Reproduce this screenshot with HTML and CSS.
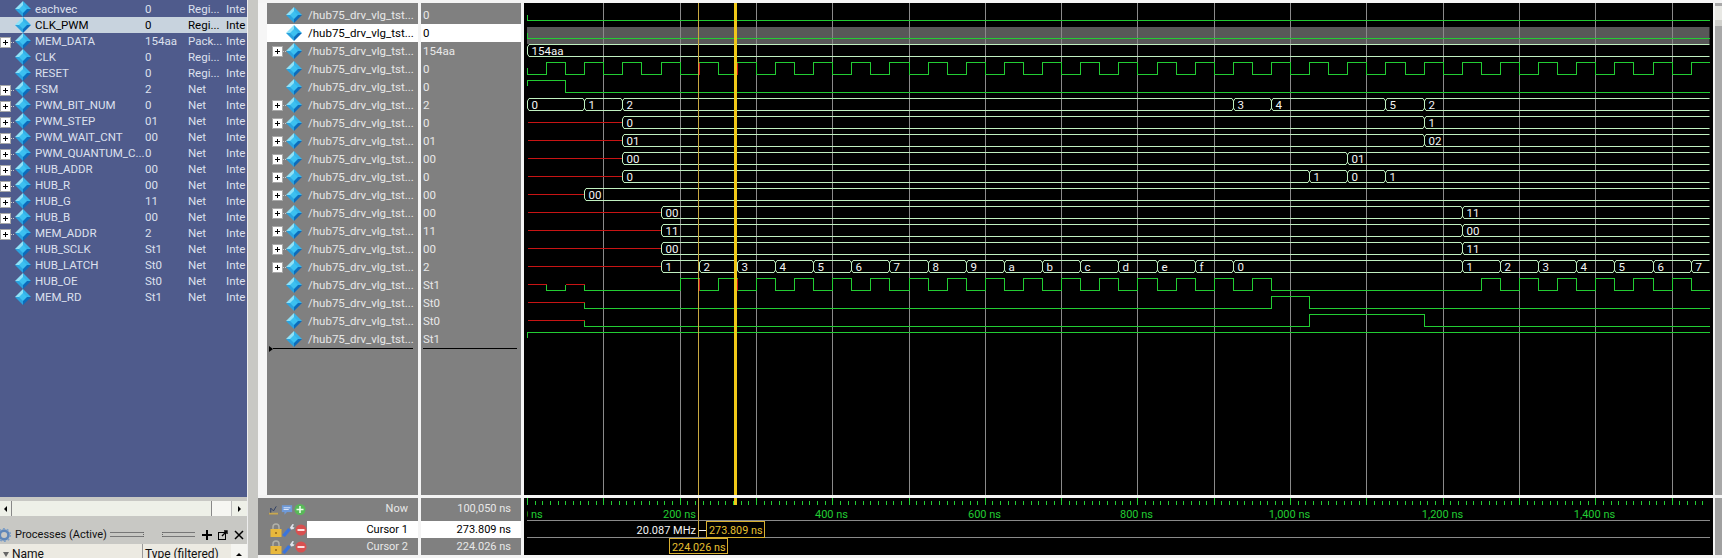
FILE: index.html
```html
<!DOCTYPE html>
<html lang="en">
<head>
<meta charset="utf-8">
<title>Wave</title>
<link rel="stylesheet" href="styles.css">
</head>
<body>
<svg class="defs" width="0" height="0" aria-hidden="true">
  <symbol id="dia" viewBox="0 0 16 16">
    <polygon points="8,0 0,8 8,8" fill="#8fe2f8"/>
    <polygon points="8,0 16,8 8,8" fill="#35b4ea"/>
    <polygon points="0,8 8,16 8,8" fill="#2aa2de"/>
    <polygon points="16,8 8,16 8,8" fill="#0b6cbc"/>
    <polygon points="8,4 12,8 8,12 4,8" fill="#3cc0f0"/>
  </symbol>
  <symbol id="plus" viewBox="0 0 15 12">
    <rect x="0.5" y="1.5" width="10" height="10" fill="#fff" stroke="#a8a8a8"/>
    <path d="M3 6.5h5M5.5 4v5" stroke="#000" fill="none"/>
    <path d="M11 6.5h4" stroke="#c8c8c8" stroke-dasharray="1 1" fill="none"/>
  </symbol>
  <symbol id="lock" viewBox="0 0 12 14">
    <path d="M3 7V4a3 3 0 0 1 6 0v3" fill="none" stroke="#b0b0a8" stroke-width="1.5"/>
    <rect x="0.5" y="6" width="11" height="8" fill="#e8b83c"/>
    <rect x="5" y="9" width="2" height="2" fill="#a87820"/>
  </symbol>
  <symbol id="wrench" viewBox="0 0 13 14">
    <path d="M1.5 13L7.5 6" stroke="#3a74dc" stroke-width="3.4" fill="none"/>
    <path d="M9 6.5L8 4.5 10.5 1 12 1.5 10.5 4 12.5 4.5 11.5 6z" fill="#dfe4ec"/>
  </symbol>
  <symbol id="minus" viewBox="0 0 12 12">
    <circle cx="6" cy="6" r="5.5" fill="#d85050"/>
    <rect x="2.5" y="5" width="7" height="2" fill="#fbe0e0"/>
  </symbol>
</svg>

<div class="app">
  <aside class="left">
    <div class="objects">
      <div class="row"><span class="tree"></span><svg class="dia"><use href="#dia"/></svg><span class="o-name">eachvec</span><span class="o-val">0</span><span class="o-kind">Regi...</span><span class="o-mode">Inte</span></div>
      <div class="row sel"><span class="tree"></span><svg class="dia"><use href="#dia"/></svg><span class="o-name">CLK_PWM</span><span class="o-val">0</span><span class="o-kind">Regi...</span><span class="o-mode">Inte</span></div>
      <div class="row"><svg class="tree"><use href="#plus"/></svg><svg class="dia"><use href="#dia"/></svg><span class="o-name">MEM_DATA</span><span class="o-val">154aa</span><span class="o-kind">Pack...</span><span class="o-mode">Inte</span></div>
      <div class="row"><span class="tree"></span><svg class="dia"><use href="#dia"/></svg><span class="o-name">CLK</span><span class="o-val">0</span><span class="o-kind">Regi...</span><span class="o-mode">Inte</span></div>
      <div class="row"><span class="tree"></span><svg class="dia"><use href="#dia"/></svg><span class="o-name">RESET</span><span class="o-val">0</span><span class="o-kind">Regi...</span><span class="o-mode">Inte</span></div>
      <div class="row"><svg class="tree"><use href="#plus"/></svg><svg class="dia"><use href="#dia"/></svg><span class="o-name">FSM</span><span class="o-val">2</span><span class="o-kind">Net</span><span class="o-mode">Inte</span></div>
      <div class="row"><svg class="tree"><use href="#plus"/></svg><svg class="dia"><use href="#dia"/></svg><span class="o-name">PWM_BIT_NUM</span><span class="o-val">0</span><span class="o-kind">Net</span><span class="o-mode">Inte</span></div>
      <div class="row"><svg class="tree"><use href="#plus"/></svg><svg class="dia"><use href="#dia"/></svg><span class="o-name">PWM_STEP</span><span class="o-val">01</span><span class="o-kind">Net</span><span class="o-mode">Inte</span></div>
      <div class="row"><svg class="tree"><use href="#plus"/></svg><svg class="dia"><use href="#dia"/></svg><span class="o-name">PWM_WAIT_CNT</span><span class="o-val">00</span><span class="o-kind">Net</span><span class="o-mode">Inte</span></div>
      <div class="row"><svg class="tree"><use href="#plus"/></svg><svg class="dia"><use href="#dia"/></svg><span class="o-name">PWM_QUANTUM_C...</span><span class="o-val">0</span><span class="o-kind">Net</span><span class="o-mode">Inte</span></div>
      <div class="row"><svg class="tree"><use href="#plus"/></svg><svg class="dia"><use href="#dia"/></svg><span class="o-name">HUB_ADDR</span><span class="o-val">00</span><span class="o-kind">Net</span><span class="o-mode">Inte</span></div>
      <div class="row"><svg class="tree"><use href="#plus"/></svg><svg class="dia"><use href="#dia"/></svg><span class="o-name">HUB_R</span><span class="o-val">00</span><span class="o-kind">Net</span><span class="o-mode">Inte</span></div>
      <div class="row"><svg class="tree"><use href="#plus"/></svg><svg class="dia"><use href="#dia"/></svg><span class="o-name">HUB_G</span><span class="o-val">11</span><span class="o-kind">Net</span><span class="o-mode">Inte</span></div>
      <div class="row"><svg class="tree"><use href="#plus"/></svg><svg class="dia"><use href="#dia"/></svg><span class="o-name">HUB_B</span><span class="o-val">00</span><span class="o-kind">Net</span><span class="o-mode">Inte</span></div>
      <div class="row"><svg class="tree"><use href="#plus"/></svg><svg class="dia"><use href="#dia"/></svg><span class="o-name">MEM_ADDR</span><span class="o-val">2</span><span class="o-kind">Net</span><span class="o-mode">Inte</span></div>
      <div class="row"><span class="tree"></span><svg class="dia"><use href="#dia"/></svg><span class="o-name">HUB_SCLK</span><span class="o-val">St1</span><span class="o-kind">Net</span><span class="o-mode">Inte</span></div>
      <div class="row"><span class="tree"></span><svg class="dia"><use href="#dia"/></svg><span class="o-name">HUB_LATCH</span><span class="o-val">St0</span><span class="o-kind">Net</span><span class="o-mode">Inte</span></div>
      <div class="row"><span class="tree"></span><svg class="dia"><use href="#dia"/></svg><span class="o-name">HUB_OE</span><span class="o-val">St0</span><span class="o-kind">Net</span><span class="o-mode">Inte</span></div>
      <div class="row"><span class="tree"></span><svg class="dia"><use href="#dia"/></svg><span class="o-name">MEM_RD</span><span class="o-val">St1</span><span class="o-kind">Net</span><span class="o-mode">Inte</span></div>
    </div>
    <div class="hscroll">
      <button class="sb-btn"><span class="arr-l"></span></button>
      <span class="sb-thumb"></span>
      <span class="sb-track"></span>
      <button class="sb-btn"><span class="arr-r"></span></button>
    </div>
    <div class="proc-title">
      <svg class="gear" viewBox="0 0 16 16"><circle cx="7" cy="8" r="5" fill="none" stroke="#5f86b8" stroke-width="3"/><circle cx="7" cy="8" r="7" fill="none" stroke="#7fa0c8" stroke-width="2" stroke-dasharray="2.2 2.2"/></svg>
      <span class="proc-label">Processes (Active)</span>
      <span class="grip"><span class="grip-dots"></span></span>
      <svg class="tb-icon" viewBox="0 0 12 12"><path d="M1 6h10M6 1v10" stroke="#000" stroke-width="2" fill="none"/></svg>
      <svg class="tb-icon" viewBox="0 0 12 12"><rect x="1.5" y="3.5" width="7" height="7" fill="none" stroke="#000"/><path d="M5 7l5-5M7 2h3v3" fill="none" stroke="#000" stroke-width="1.4"/></svg>
      <svg class="tb-icon" viewBox="0 0 12 12"><path d="M2 2l8 8M10 2l-8 8" stroke="#000" stroke-width="1.5" fill="none"/></svg>
    </div>
    <div class="proc-head">
      <span class="ph-name"><span class="ph-sort"></span>Name</span>
      <span class="ph-type">Type (filtered)</span>
      <span class="ph-up"><span class="arr-u"></span></span>
    </div>
  </aside>

  <main class="wave-window">
    <section class="w-names">
      <div class="s-row"><span class="s-tree"></span><svg class="dia"><use href="#dia"/></svg><span class="s-name">/hub75_drv_vlg_tst...</span></div>
      <div class="s-row on"><span class="s-tree"></span><svg class="dia"><use href="#dia"/></svg><span class="s-name">/hub75_drv_vlg_tst...</span></div>
      <div class="s-row"><svg class="s-tree"><use href="#plus"/></svg><svg class="dia"><use href="#dia"/></svg><span class="s-name">/hub75_drv_vlg_tst...</span></div>
      <div class="s-row"><span class="s-tree"></span><svg class="dia"><use href="#dia"/></svg><span class="s-name">/hub75_drv_vlg_tst...</span></div>
      <div class="s-row"><span class="s-tree"></span><svg class="dia"><use href="#dia"/></svg><span class="s-name">/hub75_drv_vlg_tst...</span></div>
      <div class="s-row"><svg class="s-tree"><use href="#plus"/></svg><svg class="dia"><use href="#dia"/></svg><span class="s-name">/hub75_drv_vlg_tst...</span></div>
      <div class="s-row"><svg class="s-tree"><use href="#plus"/></svg><svg class="dia"><use href="#dia"/></svg><span class="s-name">/hub75_drv_vlg_tst...</span></div>
      <div class="s-row"><svg class="s-tree"><use href="#plus"/></svg><svg class="dia"><use href="#dia"/></svg><span class="s-name">/hub75_drv_vlg_tst...</span></div>
      <div class="s-row"><svg class="s-tree"><use href="#plus"/></svg><svg class="dia"><use href="#dia"/></svg><span class="s-name">/hub75_drv_vlg_tst...</span></div>
      <div class="s-row"><svg class="s-tree"><use href="#plus"/></svg><svg class="dia"><use href="#dia"/></svg><span class="s-name">/hub75_drv_vlg_tst...</span></div>
      <div class="s-row"><svg class="s-tree"><use href="#plus"/></svg><svg class="dia"><use href="#dia"/></svg><span class="s-name">/hub75_drv_vlg_tst...</span></div>
      <div class="s-row"><svg class="s-tree"><use href="#plus"/></svg><svg class="dia"><use href="#dia"/></svg><span class="s-name">/hub75_drv_vlg_tst...</span></div>
      <div class="s-row"><svg class="s-tree"><use href="#plus"/></svg><svg class="dia"><use href="#dia"/></svg><span class="s-name">/hub75_drv_vlg_tst...</span></div>
      <div class="s-row"><svg class="s-tree"><use href="#plus"/></svg><svg class="dia"><use href="#dia"/></svg><span class="s-name">/hub75_drv_vlg_tst...</span></div>
      <div class="s-row"><svg class="s-tree"><use href="#plus"/></svg><svg class="dia"><use href="#dia"/></svg><span class="s-name">/hub75_drv_vlg_tst...</span></div>
      <div class="s-row"><span class="s-tree"></span><svg class="dia"><use href="#dia"/></svg><span class="s-name">/hub75_drv_vlg_tst...</span></div>
      <div class="s-row"><span class="s-tree"></span><svg class="dia"><use href="#dia"/></svg><span class="s-name">/hub75_drv_vlg_tst...</span></div>
      <div class="s-row"><span class="s-tree"></span><svg class="dia"><use href="#dia"/></svg><span class="s-name">/hub75_drv_vlg_tst...</span></div>
      <div class="s-row"><span class="s-tree"></span><svg class="dia"><use href="#dia"/></svg><span class="s-name">/hub75_drv_vlg_tst...</span></div>
      <div class="ins-name"><span class="ins-tri"></span><span class="ins-line"></span></div>
    </section>
    <section class="w-values">
      <div class="v-row">0</div>
      <div class="v-row on">0</div>
      <div class="v-row">154aa</div>
      <div class="v-row">0</div>
      <div class="v-row">0</div>
      <div class="v-row">2</div>
      <div class="v-row">0</div>
      <div class="v-row">01</div>
      <div class="v-row">00</div>
      <div class="v-row">0</div>
      <div class="v-row">00</div>
      <div class="v-row">00</div>
      <div class="v-row">11</div>
      <div class="v-row">00</div>
      <div class="v-row">2</div>
      <div class="v-row">St1</div>
      <div class="v-row">St0</div>
      <div class="v-row">St0</div>
      <div class="v-row">St1</div>
      <div class="ins-val"></div>
    </section>
    <section class="w-canvas"><svg id="waves" class="w-svg" viewBox="524 3 1189 492" width="1189" height="492"></svg></section>
    <section class="w-side">
      <span class="side-btn"></span>
      <span class="side-thumb"></span>
    </section>

    <section class="c-names">
      <div class="c-row now">
        <span class="c-icons now-icons">
          <svg class="ni" viewBox="0 0 12 12"><path d="M1 10h10M3 10V4l3 3 3-5" stroke="#2a3a60" fill="none"/><rect x="1" y="9" width="10" height="2" fill="#c8a850"/></svg>
          <svg class="ni wide" viewBox="0 0 14 14"><rect x="1" y="2" width="12" height="8" fill="#6f9ad8"/><path d="M3 5h8M3 7h6" stroke="#e8f0ff"/><path d="M4 10v3l3-3z" fill="#6f9ad8"/></svg>
          <svg class="ni wide" viewBox="0 0 12 12"><circle cx="6" cy="6" r="5.5" fill="#58b858"/><path d="M2.5 6h7M6 2.5v7" stroke="#e8ffe8" stroke-width="1.6"/></svg>
        </span>
        <span class="c-label">Now</span>
      </div>
      <div class="c-row">
        <span class="c-icons cur-icons"><svg class="ci"><use href="#lock"/></svg><svg class="ci ci-w"><use href="#wrench"/></svg><svg class="ci ci-m"><use href="#minus"/></svg></span>
        <span class="c-label on">Cursor 1</span>
      </div>
      <div class="c-row">
        <span class="c-icons cur-icons"><svg class="ci"><use href="#lock"/></svg><svg class="ci ci-w"><use href="#wrench"/></svg><svg class="ci ci-m"><use href="#minus"/></svg></span>
        <span class="c-label">Cursor 2</span>
      </div>
    </section>
    <section class="c-values">
      <div class="c-val now">100,050 ns</div>
      <div class="c-val on">273.809 ns</div>
      <div class="c-val">224.026 ns</div>
    </section>
    <section class="c-canvas"><svg id="ruler" class="w-svg" viewBox="524 498 1189 57" width="1189" height="57"></svg></section>
    <section class="c-side"></section>
  </main>
</div>
<script src="waves.js"></script>
</body>
</html>
```
FILE: styles.css
```css
* { box-sizing: border-box; }
html, body { margin: 0; padding: 0; }
body {
  width: 1722px;
  height: 558px;
  overflow: hidden;
  background: #c8c8c4;
  font-family: Roboto, "Liberation Sans", sans-serif;
  font-size: 11.5px;
}
.defs { position: absolute; }
.app { display: flex; height: 558px; }

/* left panel */
.left { width: 248px; display: flex; flex-direction: column; border-right: 1px solid #eee; flex: none; }
.objects { height: 497px; background: #4f5b8c; padding-top: 1px; color: #dde0ee; overflow: hidden; flex: none; }
.row { display: grid; grid-template-columns: 15px 16px 114px 43px 38px 1fr; height: 16px; line-height: 16px; white-space: nowrap; overflow: hidden; align-items: center; }
.row.sel { background: #c8d3de; color: #000; }
.row .tree { width: 15px; height: 12px; margin-top: 1px; }
.row .dia { width: 16px; height: 16px; }
.o-name { padding-left: 4px; }
.tree, .s-tree { display: block; }

.hscroll { height: 15px; margin-top: 4px; display: flex; background: #eef0e8; flex: none; }
.sb-btn { width: 12px; padding: 0; border: 0; border-right: 1px solid #888; background: #eef0e8; display: flex; align-items: center; justify-content: center; }
.sb-btn:last-child { width: 16px; border-right: 0; border-left: 1px solid #bbb; }
.arr-l { width: 0; height: 0; border: 3px solid transparent; border-right: 3px solid #000; border-left: 0; }
.arr-r { width: 0; height: 0; border: 3px solid transparent; border-left: 3px solid #000; border-right: 0; }
.arr-u { display: block; width: 0; height: 0; border: 3px solid transparent; border-bottom: 3px solid #000; border-top: 0; }
.sb-thumb { width: 200px; border-right: 1px solid #888; }
.sb-track { flex: 1; background: #f6f6f2; }

.proc-title { height: 19px; margin-top: 9px; display: flex; align-items: center; color: #111; font-size: 11px; flex: none; white-space: nowrap; }
.gear { width: 14px; height: 16px; margin-left: -2px; flex: none; }
.proc-label { margin-left: 3px; width: 95px; flex: none; }
.grip { width: 85px; height: 5px; border-top: 1px solid #777; border-bottom: 1px solid #777; display: flex; justify-content: center; flex: none; margin-right: 6px; }
.grip-dots { width: 20px; height: 5px; margin-top: -1px; background: #c8c8c4; border-left: 1px dotted #666; border-right: 1px dotted #666; }
.tb-icon { width: 12px; height: 12px; margin-right: 4px; flex: none; }
.proc-head { flex: 1; display: flex; background: #eceae2; color: #111; font-size: 12px; line-height: 20px; white-space: nowrap; }
.ph-name { width: 143px; border-right: 1px solid #999; padding-left: 3px; display: flex; align-items: center; }
.ph-sort { width: 0; height: 0; border: 3px solid transparent; border-top: 5px solid #666; border-bottom: 0; margin-right: 3px; }
.ph-type { width: 88px; padding-left: 2px; }
.ph-up { flex: 1; display: flex; align-items: center; justify-content: center; background: #f4f4f0; }

/* wave window */
.wave-window {
  margin-left: 10px;
  width: 1464px;
  height: 558px;
  padding: 3px 0;
  background: #f4f4f4;
  display: grid;
  grid-template-columns: 160px 100px 1189px 7px;
  grid-template-rows: 492px 57px;
  column-gap: 3px;
  row-gap: 3px;
  color: #e8e8e8;
}
.w-names { background: #808080; border-left: 9px solid #f6f6f6; padding-top: 3px; overflow: hidden; }
.w-values { background: #808080; padding-top: 3px; overflow: hidden; }
.s-row { display: grid; grid-template-columns: 19px 16px 1fr; height: 18px; align-items: center; padding-right: 3px; white-space: nowrap; overflow: hidden; }
.s-tree { width: 15px; height: 12px; margin-left: 5px; }
.s-name { padding-left: 6px; }
.s-row .dia { width: 16px; height: 16px; }
.s-row.on, .v-row.on { background: #fff; color: #000; }
.v-row { height: 18px; line-height: 18px; padding-left: 2px; }
.ins-name { display: flex; align-items: center; height: 1px; padding-left: 2px; padding-right: 5px; }
.ins-tri { width: 0; height: 0; border: 3px solid transparent; border-left: 4px solid #000; border-right: 0; }
.ins-line { flex: 1; height: 1px; background: #000; }
.ins-val { height: 1px; margin: 0 4px 0 2px; background: #000; }
.w-canvas, .c-canvas { background: #000; overflow: hidden; }
.w-svg { display: block; }
.w-side { background: #a8a8a8; margin-left: -1px; padding-top: 3px; display: flex; flex-direction: column; }
.side-btn { height: 14px; background: #e8e8e4; }
.side-thumb { height: 6px; background: #d0d0cc; }
.c-side { background: #a0a0a0; margin-left: -1px; }

.c-names, .c-values { background: #808080; overflow: hidden; }
.c-row { display: flex; height: 17px; }
.c-row.now { height: 23px; }
.c-icons { width: 49px; display: flex; align-items: center; flex: none; }
.now-icons { padding-left: 10px; }
.cur-icons { padding-left: 12px; }
.ni { width: 11px; height: 12px; margin-right: 2px; }
.ni.wide { width: 12px; height: 13px; margin-right: 1px; }
.ci { width: 12px; height: 14px; flex: none; }
.ci-w { width: 13px; }
.ci-m { width: 12px; height: 12px; }
.c-label { flex: 1; text-align: right; padding-right: 10px; line-height: 17px; font-size: 11px; }
.now .c-label { line-height: 22px; }
.c-label.on, .c-val.on { background: #fff; color: #000; }
.c-val { height: 17px; line-height: 17px; text-align: right; padding-right: 10px; font-size: 11px; }
.c-val.now { height: 23px; line-height: 22px; }
```
FILE: waves.js
```js
(function () {
  var NS = 'http://www.w3.org/2000/svg';
  var END = 1709.5, GREEN = '#22cc33', BUS = '#c0f0c0', RED = '#c81414', GRID = '#8a8a8a';
  var FONT = 'Roboto, "Liberation Sans", sans-serif';
  function X(t) { return Math.round(527 + 0.7631 * t) + 0.5; }
  function el(parent, name, attrs, text) {
    var e = document.createElementNS(NS, name);
    for (var k in attrs) e.setAttribute(k, attrs[k]);
    if (text !== undefined) e.textContent = text;
    parent.appendChild(e);
    return e;
  }
  function line(p, d, color, w) {
    el(p, 'path', { d: d, fill: 'none', stroke: color, 'stroke-width': w || 1, 'shape-rendering': 'crispEdges' });
  }
  function top(n) { return 8.5 + 18 * n; }
  function bot(n) { return 20.5 + 18 * n; }
  function mid(n) { return 14.5 + 18 * n; }

  var s = document.getElementById('waves');

  // selected row band
  el(s, 'rect', { x: 527, y: 27, width: END - 527, height: 17, fill: '#585858' });

  // grid
  for (var g = 1; g <= 15; g++) line(s, 'M' + X(g * 100) + ' 3V495', GRID);

  // single bit rows
  line(s, 'M527.5 15V20.5H' + END, GREEN);
  line(s, 'M527.5 33V38.5H' + END, GREEN);
  var d3 = 'M527.5 68V' + bot(3);
  for (var t = 25; t < 1550; t += 50) {
    d3 += 'H' + X(t) + 'V' + top(3);
    if (t + 25 < 1550) d3 += 'H' + X(t + 25) + 'V' + bot(3);
  }
  line(s, d3 + 'H' + END, GREEN);
  line(s, 'M527.5 86V' + top(4) + 'H' + X(50) + 'V' + bot(4) + 'H' + END, GREEN);

  // row 15: unknown start, two bursts of clock
  line(s, 'M527.5 ' + mid(15) + 'H' + X(25), RED);
  line(s, 'M' + X(50) + ' ' + mid(15) + 'H' + X(75), RED);
  line(s, 'M' + X(25) + ' ' + mid(15) + 'V' + bot(15) + 'H' + X(50) + 'V' + mid(15), GREEN);
  var d15 = 'M' + X(75) + ' ' + mid(15) + 'V' + bot(15);
  for (t = 200; t <= 950; t += 50) d15 += 'H' + X(t) + 'V' + top(15) + 'H' + X(t + 25) + 'V' + bot(15);
  for (t = 1250; t <= 1500; t += 50) d15 += 'H' + X(t) + 'V' + top(15) + 'H' + X(t + 25) + 'V' + bot(15);
  line(s, d15 + 'H' + END, GREEN);

  // row 16, 17: red then single pulse
  line(s, 'M527.5 ' + mid(16) + 'H' + X(75), RED);
  line(s, 'M' + X(75) + ' ' + mid(16) + 'V' + bot(16) + 'H' + X(975) + 'V' + top(16) + 'H' + X(1025) + 'V' + bot(16) + 'H' + END, GREEN);
  line(s, 'M527.5 ' + mid(17) + 'H' + X(75), RED);
  line(s, 'M' + X(75) + ' ' + mid(17) + 'V' + bot(17) + 'H' + X(1025) + 'V' + top(17) + 'H' + X(1175) + 'V' + bot(17) + 'H' + END, GREEN);
  line(s, 'M527.5 338V' + top(18) + 'H' + END, GREEN);

  // red edges at the cursor-delta transitions
  [225, 275].forEach(function (c) {
    line(s, 'M' + X(c) + ' ' + top(3) + 'V' + bot(3), RED);
    line(s, 'M' + X(c) + ' ' + top(15) + 'V' + bot(15), RED);
  });

  // buses
  function busRow(n, segs) {
    var T = top(n), B = bot(n), c = 1.5, e = 2.5;
    if (segs[0][0] > 0) line(s, 'M527.5 ' + mid(n) + 'H' + X(segs[0][0]), RED);
    segs.forEach(function (seg, i) {
      var x1 = X(seg[0]);
      var last = i === segs.length - 1;
      var x2 = last ? END : X(segs[i + 1][0]);
      var d = 'M' + (x1 + c) + ' ' + T + 'L' + x1 + ' ' + (T + e) + 'V' + (B - e) + 'L' + (x1 + c) + ' ' + B;
      if (last) {
        d += 'H' + x2 + 'M' + (x1 + c) + ' ' + T + 'H' + x2;
      } else {
        d += 'H' + (x2 - c) + 'L' + x2 + ' ' + (B - e) + 'V' + (T + e) + 'L' + (x2 - c) + ' ' + T + 'Z';
      }
      el(s, 'path', { d: d, fill: 'none', stroke: BUS });
      el(s, 'text', { x: x1 + 4, y: T + 10.5, fill: '#f4f4f4', 'font-family': FONT, 'font-size': '11.5' }, seg[1]);
    });
  }
  busRow(2, [[0, '154aa']]);
  busRow(5, [[0, '0'], [75, '1'], [125, '2'], [925, '3'], [975, '4'], [1125, '5'], [1175, '2']]);
  busRow(6, [[125, '0'], [1175, '1']]);
  busRow(7, [[125, '01'], [1175, '02']]);
  busRow(8, [[125, '00'], [1075, '01']]);
  busRow(9, [[125, '0'], [1025, '1'], [1075, '0'], [1125, '1']]);
  busRow(10, [[75, '00']]);
  busRow(11, [[175, '00'], [1225, '11']]);
  busRow(12, [[175, '11'], [1225, '00']]);
  busRow(13, [[175, '00'], [1225, '11']]);
  var row14 = [];
  '123456789abcdef0'.split('').forEach(function (v, i) { row14.push([175 + 50 * i, v]); });
  '1234567'.split('').forEach(function (v, i) { row14.push([1225 + 50 * i, v]); });
  busRow(14, row14);

  // cursors
  el(s, 'rect', { x: 698, y: 3, width: 1, height: 492, fill: '#c8a840' });
  el(s, 'rect', { x: 734, y: 3, width: 3, height: 492, fill: '#f0c818' });

  // ruler
  var r = document.getElementById('ruler');
  for (g = 0; g <= 155; g++) {
    var x = X(g * 10);
    if (x > END) break;
    line(r, 'M' + x + (g % 10 === 0 ? ' 498V505' : ' 501V505'), GREEN);
  }
  var clip = el(r, 'clipPath', { id: 'rclip' });
  el(clip, 'rect', { x: 527, y: 498, width: 1186, height: 22 });
  var labels = el(r, 'g', { 'clip-path': 'url(#rclip)', fill: GREEN, 'font-family': FONT, 'font-size': '11', 'text-anchor': 'middle' });
  el(labels, 'text', { x: 522, y: 518, 'text-anchor': 'start' }, '0 ns');
  [[200, '200 ns'], [400, '400 ns'], [600, '600 ns'], [800, '800 ns'], [1000, '1,000 ns'], [1200, '1,200 ns'], [1400, '1,400 ns']].forEach(function (l) {
    el(labels, 'text', { x: X(l[0]) - 1, y: 518 }, l[1]);
  });
  line(r, 'M527 520.5H' + END, '#8a8a8a');
  line(r, 'M527 537.5H' + END, '#8a8a8a');
  el(r, 'rect', { x: 698, y: 498, width: 1, height: 39, fill: '#c8a840' });
  el(r, 'rect', { x: 734, y: 498, width: 3, height: 7, fill: '#f0c818' });
  line(r, 'M699 530.5H706', '#f4f4f4');
  el(r, 'text', { x: 696, y: 534, fill: '#f4f4f4', 'font-family': FONT, 'font-size': '11', 'text-anchor': 'end' }, '20.087 MHz');
  el(r, 'rect', { x: 706.5, y: 521.5, width: 58, height: 16, fill: '#000', stroke: '#d8b030' });
  el(r, 'text', { x: 709, y: 534, fill: '#e8c030', 'font-family': FONT, 'font-size': '10.8' }, '273.809 ns');
  el(r, 'rect', { x: 669.5, y: 538.5, width: 58, height: 15, fill: '#000', stroke: '#d8b030' });
  el(r, 'text', { x: 672, y: 551, fill: '#e8c030', 'font-family': FONT, 'font-size': '10.8' }, '224.026 ns');
})();
```
